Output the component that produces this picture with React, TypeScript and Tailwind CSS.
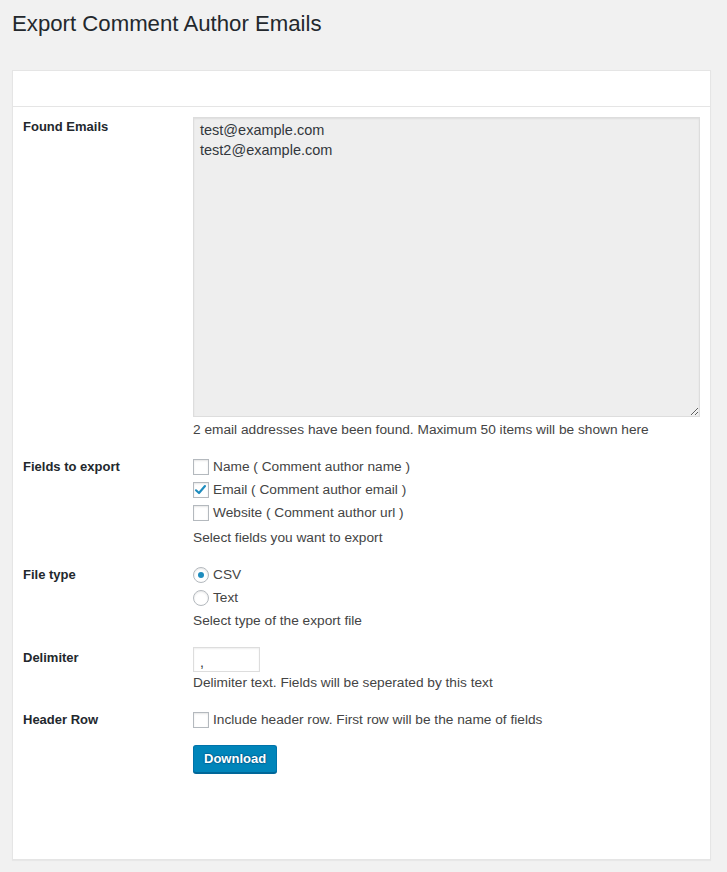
import { useState } from "react";

const font = { fontFamily: '"Liberation Sans", Arial, sans-serif' };

const CheckBox = ({ checked, onChange }: { checked: boolean; onChange: () => void }) => (
  <button
    type="button"
    onClick={onChange}
    className="w-4 h-4 shrink-0 border border-[#b4b9be] bg-white shadow-[inset_0_1px_2px_rgba(0,0,0,0.1)] flex items-center justify-center"
  >
    {checked && (
      <svg viewBox="0 0 16 16" className="w-[18px] h-[18px] -mt-[1px] -ml-[1px]">
        <path d="M3.2 8.3 L6.4 11.2 L12.8 3.8" fill="none" stroke="#1e8cbe" strokeWidth="2.3" strokeLinecap="round" strokeLinejoin="round" />
      </svg>
    )}
  </button>
);

const Radio = ({ checked, onChange }: { checked: boolean; onChange: () => void }) => (
  <button
    type="button"
    onClick={onChange}
    className="w-4 h-4 shrink-0 rounded-full border border-[#b4b9be] bg-white shadow-[inset_0_1px_2px_rgba(0,0,0,0.1)] flex items-center justify-center"
  >
    {checked && <span className="w-[6px] h-[6px] rounded-full bg-[#1e8cbe]"></span>}
  </button>
);

const fields = [
  { key: "name", label: "Name ( Comment author name )" },
  { key: "email", label: "Email ( Comment author email )" },
  { key: "url", label: "Website ( Comment author url )" },
];

export default function App() {
  const [selected, setSelected] = useState<Record<string, boolean>>({ email: true });
  const [fileType, setFileType] = useState("csv");
  const [headerRow, setHeaderRow] = useState(false);
  const [delimiter, setDelimiter] = useState(",");

  return (
    <div className="min-h-[872px] bg-[#f1f1f1] text-[#444] text-[13.7px]" style={font}>
      <div className="pl-3 pr-4 pt-[9px] pb-3">
        <h1 className="text-[22.2px] leading-[29px] text-[#23282d] font-normal">Export Comment Author Emails</h1>

        <div className="mt-[32px] bg-white border border-[#e5e5e5] shadow-[0_1px_1px_rgba(0,0,0,0.04)] h-[790px]">
          {/* Header */}
          <div className="h-[36px] border-b border-[#e5e5e5]"></div>

          <div className="pt-[10px] pl-[10px] pr-[10px] flex flex-col gap-[17px]">
            {/* Found Emails */}
            <div className="flex">
              <div className="w-[170px] shrink-0 font-bold text-[13px] text-[#23282d] leading-[20px]">Found Emails</div>
              <div className="flex-1">
                <textarea
                  readOnly
                  className="block w-full h-[300px] bg-[#eee] border border-[#ddd] shadow-[inset_0_1px_2px_rgba(0,0,0,0.07)] text-[14.5px] leading-[20px] text-[#32373c] px-[6px] pt-[2px] outline-none resize-y"
                  style={font}
                  value={"test@example.com\ntest2@example.com"}
                />
                <p className="mt-[3px] leading-[20px]">2 email addresses have been found. Maximum 50 items will be shown here</p>
              </div>
            </div>

            {/* Fields to export */}
            <div className="flex">
              <div className="w-[170px] shrink-0 font-bold text-[13px] text-[#23282d] leading-[20px]">Fields to export</div>
              <div className="flex-1">
                <div className="flex flex-col gap-[3px]">
                  {fields.map((f) => (
                    <label key={f.key} className="flex items-center gap-[4px] leading-[20px] cursor-pointer">
                      <CheckBox
                        checked={!!selected[f.key]}
                        onChange={() => setSelected({ ...selected, [f.key]: !selected[f.key] })}
                      />
                      <span>{f.label}</span>
                    </label>
                  ))}
                </div>
                <p className="mt-[5px] leading-[20px]">Select fields you want to export</p>
              </div>
            </div>

            {/* File type */}
            <div className="flex">
              <div className="w-[170px] shrink-0 font-bold text-[13px] text-[#23282d] leading-[20px]">File type</div>
              <div className="flex-1">
                <div className="flex flex-col gap-[3px]">
                  <label className="flex items-center gap-[4px] leading-[20px] cursor-pointer">
                    <Radio checked={fileType === "csv"} onChange={() => setFileType("csv")} />
                    <span>CSV</span>
                  </label>
                  <label className="flex items-center gap-[4px] leading-[20px] cursor-pointer">
                    <Radio checked={fileType === "text"} onChange={() => setFileType("text")} />
                    <span>Text</span>
                  </label>
                </div>
                <p className="mt-[3px] leading-[20px]">Select type of the export file</p>
              </div>
            </div>

            {/* Delimiter */}
            <div className="flex">
              <div className="w-[170px] shrink-0 font-bold text-[13px] text-[#23282d] leading-[20px]">Delimiter</div>
              <div className="flex-1">
                <input
                  type="text"
                  value={delimiter}
                  onChange={(e) => setDelimiter(e.target.value)}
                  className="block w-[67px] h-[25px] -mt-[1px] mb-[1px] border border-[#ddd] shadow-[inset_0_1px_2px_rgba(0,0,0,0.07)] px-[6px] pt-[5px] text-[14px] text-[#32373c] outline-none"
                  style={font}
                />
                <p className="leading-[20px]">Delimiter text. Fields will be seperated by this text</p>
              </div>
            </div>

            {/* Header Row */}
            <div className="flex">
              <div className="w-[170px] shrink-0 font-bold text-[13px] text-[#23282d] leading-[20px]">Header Row</div>
              <div className="flex-1">
                <label className="flex items-center gap-[4px] leading-[20px] cursor-pointer">
                  <CheckBox checked={headerRow} onChange={() => setHeaderRow(!headerRow)} />
                  <span>Include header row. First row will be the name of fields</span>
                </label>
                <button
                  type="button"
                  className="mt-[15px] h-[28px] px-[10px] pb-[1px] rounded-[3px] bg-[#0085ba] border border-[#0073aa] border-b-[#006799] shadow-[0_1px_0_#006799] text-white font-bold text-[13px] [text-shadow:0_-1px_1px_#006799,1px_0_1px_#006799,0_1px_1px_#006799,-1px_0_1px_#006799]"
                >
                  Download
                </button>
              </div>
            </div>
          </div>
        </div>
      </div>
    </div>
  );
}
